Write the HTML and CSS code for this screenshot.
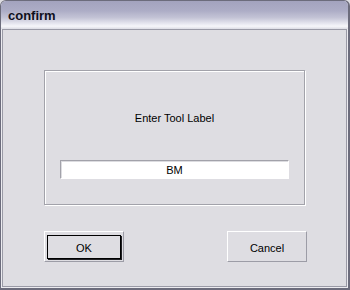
FILE: index.html
```html
<!DOCTYPE html>
<html lang="en">
<head>
    <meta charset="UTF-8">
    <title>confirm</title>
    <link rel="stylesheet" href="styles.css">
</head>
<body>
    <div class="window">
        <div class="titlebar">confirm</div>
        <div class="content">
            <div class="group">
                <p class="label">Enter Tool Label</p>
                <div class="field">BM</div>
            </div>
            <div class="buttons">
                <div class="btn default"><span>OK</span></div>
                <div class="btn">Cancel</div>
            </div>
        </div>
    </div>
</body>
</html>
```

FILE: styles.css
```css
body {
    margin: 0;
    font-family: 'Liberation Sans', Arial, sans-serif;
    font-size: 11px;
    color: #000;
    background: #dedde2;
}

.window {
    width: 350px;
    height: 290px;
    box-sizing: border-box;
    display: flex;
    flex-direction: column;
    border: 1px solid #6c6c7c;
    border-right-width: 2px;
    border-bottom-width: 2px;
    border-radius: 6px 6px 0 0;
    background: #ecebf0;
    overflow: hidden;
}

.titlebar {
    height: 28px;
    line-height: 30px;
    padding-left: 7px;
    font-size: 13px;
    font-weight: bold;
    color: #10101c;
    background: linear-gradient(to bottom, #a3a3be 0%, #adadc6 35%, #c4c4d6 60%, #e9e9f1 82%, #f6f6fa 90%, #dcdce4 100%);
}

.content {
    flex: 1;
    margin: 0 1px 1px 1px;
    border: 1px solid #9a9aa6;
    background: #dedde2;
}

.group {
    width: 261px;
    height: 135px;
    box-sizing: border-box;
    margin: 40px 0 0 41px;
    padding-top: 41px;
    border: 1px solid #a2a2aa;
    box-shadow: 1px 1px 0 #fff, inset 1px 1px 0 #fff;
}

.label {
    margin: 0;
    line-height: 13px;
    text-align: center;
}

.field {
    width: 229px;
    height: 19px;
    box-sizing: border-box;
    margin: 35px 0 0 15px;
    line-height: 18px;
    text-align: center;
    background: #fff;
    border: 1px solid #fff;
    border-top-color: #a2a2aa;
    border-left-color: #a2a2aa;
    box-shadow: inset 1px 1px 0 #dcdce0;
}

.buttons {
    display: flex;
    justify-content: space-between;
    width: 263px;
    margin: 26px 0 0 41px;
}

.btn {
    width: 80px;
    height: 31px;
    box-sizing: border-box;
    display: flex;
    align-items: center;
    justify-content: center;
    padding-top: 2px;
    border: 1px solid #fff;
    border-right-color: #9c9ca6;
    border-bottom-color: #9c9ca6;
    background: #dedde2;
}

.btn.default {
    padding: 3px 2px 2px 2px;
}

.btn.default span {
    flex: 1;
    align-self: stretch;
    display: flex;
    align-items: center;
    justify-content: center;
    padding-top: 1px;
    border: 1px solid #000;
    box-shadow: 1px 1px 0 #202024;
}
```
